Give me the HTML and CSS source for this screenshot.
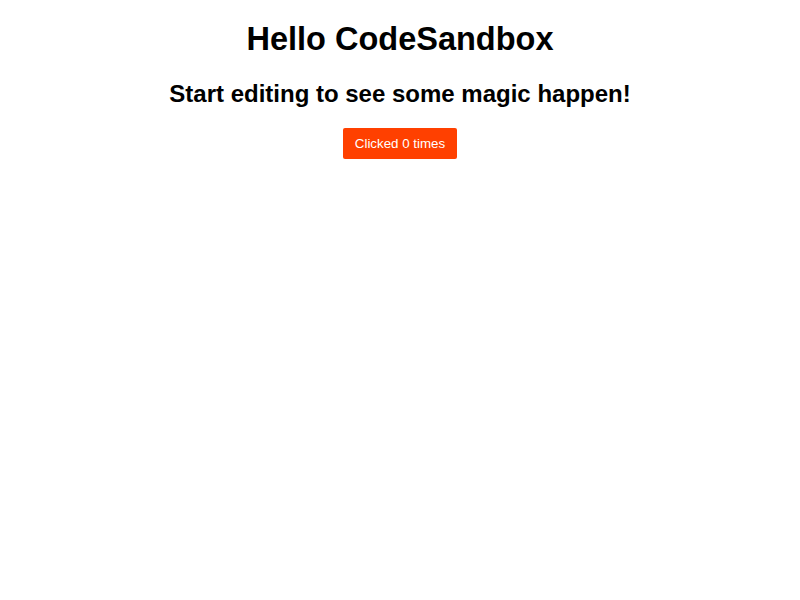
FILE: index.html
```html
<!DOCTYPE html>
<html>
<head>
<meta charset="utf-8">
<link rel="stylesheet" href="styles.css">
</head>
<body>
<div class="app">
  <h1 class="title">Hello CodeSandbox</h1>
  <h2 class="subtitle">Start editing to see some magic happen!</h2>
  <button class="btn">Clicked 0 times</button>
</div>
</body>
</html>
```

FILE: styles.css
```css
body {
  margin: 0;
  font-family: "Liberation Sans", Arial, sans-serif;
  background: #fff;
}
.app {
  text-align: center;
}
.title {
  font-size: 32.5px;
  margin: 21.44px 0;
}
.subtitle {
  font-size: 24px;
  margin: 19.92px 0;
}
.btn {
  font-family: "Liberation Sans", Arial, sans-serif;
  font-size: 13.333px;
  background: #ff4000;
  color: #fff;
  border: none;
  border-radius: 2px;
  padding: 8px 12px;
  height: 31px;
}
```
